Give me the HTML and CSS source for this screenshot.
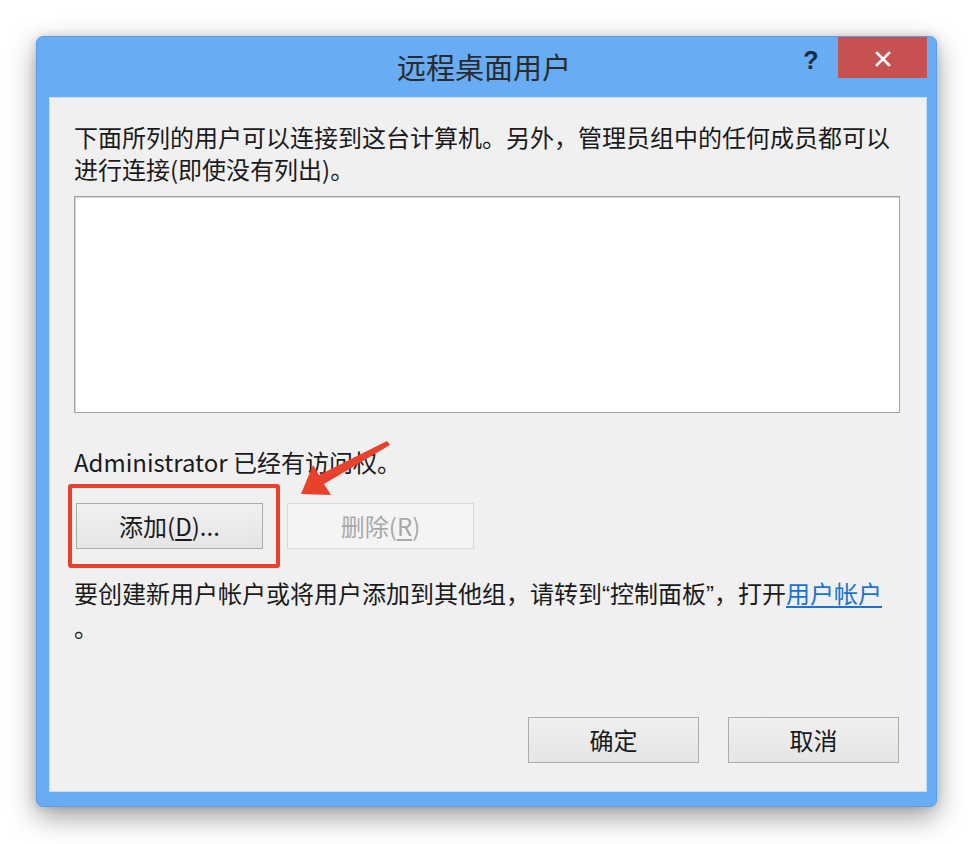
FILE: index.html
```html
<!DOCTYPE html>
<html lang="zh-CN">
<head>
<meta charset="utf-8">
<title>远程桌面用户</title>
<link rel="stylesheet" href="styles.css">
</head>
<body>
<div class="window">
  <div class="titlebar">
    <div class="spacer"></div>
    <div class="title">远程桌面用户</div>
    <div class="controls">
      <span class="help">?</span>
      <span class="close">
        <svg width="16" height="16" viewBox="0 0 16 16"><path d="M2 2 L14 14 M14 2 L2 14" stroke="#fff" stroke-width="2.6" stroke-linecap="square" fill="none"/></svg>
      </span>
    </div>
  </div>
  <div class="client">
    <p class="desc">下面所列的用户可以连接到这台计算机。另外，管理员组中的任何成员都可以进行连接(即使没有列出)。</p>
    <div class="listbox"></div>
    <p class="status">Administrator 已经有访问权。</p>
    <div class="row">
      <div class="add-wrap">
        <button class="btn">添加(<u>D</u>)...</button>
        <span class="highlight"></span>
      </div>
      <button class="btn disabled">删除(<u>R</u>)</button>
    </div>
    <p class="hint">要创建新用户帐户或将用户添加到其他组，请转到<span class="q">“</span>控制面板<span class="q">”</span>，打开<a class="link" href="#">用户帐户</a><br>。</p>
    <div class="footer">
      <button class="btn btn-foot">确定</button>
      <button class="btn btn-foot">取消</button>
    </div>
    <svg class="arrow" width="110" height="75" viewBox="0 0 110 75">
      <polygon points="10,63 22,34 28,44 96,10 99,14 33,53 40,64" fill="#e8412c"/>
    </svg>
  </div>
</div>
</body>
</html>
```

FILE: styles.css
```css
html, body {
  margin: 0;
  padding: 0;
  background: #ffffff;
}
body {
  font-family: "Noto Sans CJK SC", "Noto Sans", sans-serif;
  color: #1a1a1a;
  min-height: 844px;
}
.window {
  box-sizing: border-box;
  margin: 36px 0 0 36px;
  width: 901px;
  height: 771px;
  background: #68acf4;
  border: 1px solid #5c9de6;
  border-radius: 7px;
  box-shadow: 0 10px 28px rgba(0, 0, 0, 0.38), 0 0 8px rgba(0, 0, 0, 0.15);
  display: flex;
  flex-direction: column;
}
.titlebar {
  height: 60px;
  display: grid;
  grid-template-columns: 1fr auto 1fr;
  align-items: start;
  padding-right: 9px;
}
.title {
  font-size: 29px;
  line-height: 40px;
  padding-top: 9px;
  padding-left: 4px;
  color: #2b2b2b;
}
.controls {
  display: flex;
  justify-content: flex-end;
  align-items: flex-start;
}
.help {
  width: 30px;
  margin-right: 12px;
  margin-top: 8px;
  text-align: center;
  font-family: "Liberation Sans", "DejaVu Sans", sans-serif;
  font-weight: bold;
  font-size: 25px;
  line-height: 30px;
  color: #1b2a3f;
}
.close {
  width: 89px;
  height: 41px;
  background: #c75050;
  display: flex;
  align-items: center;
  justify-content: center;
  padding-top: 2px;
  box-sizing: border-box;
}
.client {
  position: relative;
  flex: 1;
  margin: 0 9px 14px 12px;
  background: #f0f0f0;
  border: 1px solid #c9ddf1;
  padding: 23px 26px 28px 24px;
  display: flex;
  flex-direction: column;
  font-size: 24px;
  line-height: 32px;
}
.desc {
  margin: 0;
}
.listbox {
  margin-top: 11px;
  height: 215px;
  background: #ffffff;
  border: 1px solid #a3a3a3;
  box-shadow: inset 1px 1px 0 #d6d6d6;
}
.status {
  margin: 33px 0 0;
}
.row {
  margin-top: 25px;
  margin-left: 2px;
  display: flex;
  gap: 24px;
}
.add-wrap {
  position: relative;
}
.btn {
  font-family: "Noto Sans CJK SC", "Noto Sans", sans-serif;
  font-size: 24px;
  line-height: 30px;
  color: #1a1a1a;
  width: 187px;
  height: 46px;
  padding: 0;
  margin: 0;
  background: linear-gradient(#f0f0f0, #e5e5e5);
  border: 1px solid #acacac;
  border-radius: 0;
}
.btn u {
  text-underline-offset: 3px;
}
.btn.disabled {
  background: #f4f4f4;
  border-color: #d9d9d9;
  color: #a8a8a8;
}
.highlight {
  position: absolute;
  left: -8px;
  top: -19px;
  right: -17px;
  bottom: -19px;
  border: 4px solid #e8412c;
  border-radius: 3px;
}
.hint {
  margin: 28px 0 0;
}
.q {
  font-family: "Liberation Sans", sans-serif;
}
.link {
  color: #1a73d0;
  text-decoration: underline;
  text-underline-offset: 3px;
}
.footer {
  margin-top: auto;
  display: flex;
  justify-content: flex-end;
  gap: 29px;
  padding-right: 1px;
}
.btn-foot {
  width: 171px;
}
.arrow {
  position: absolute;
  left: 241px;
  top: 333px;
}
```
